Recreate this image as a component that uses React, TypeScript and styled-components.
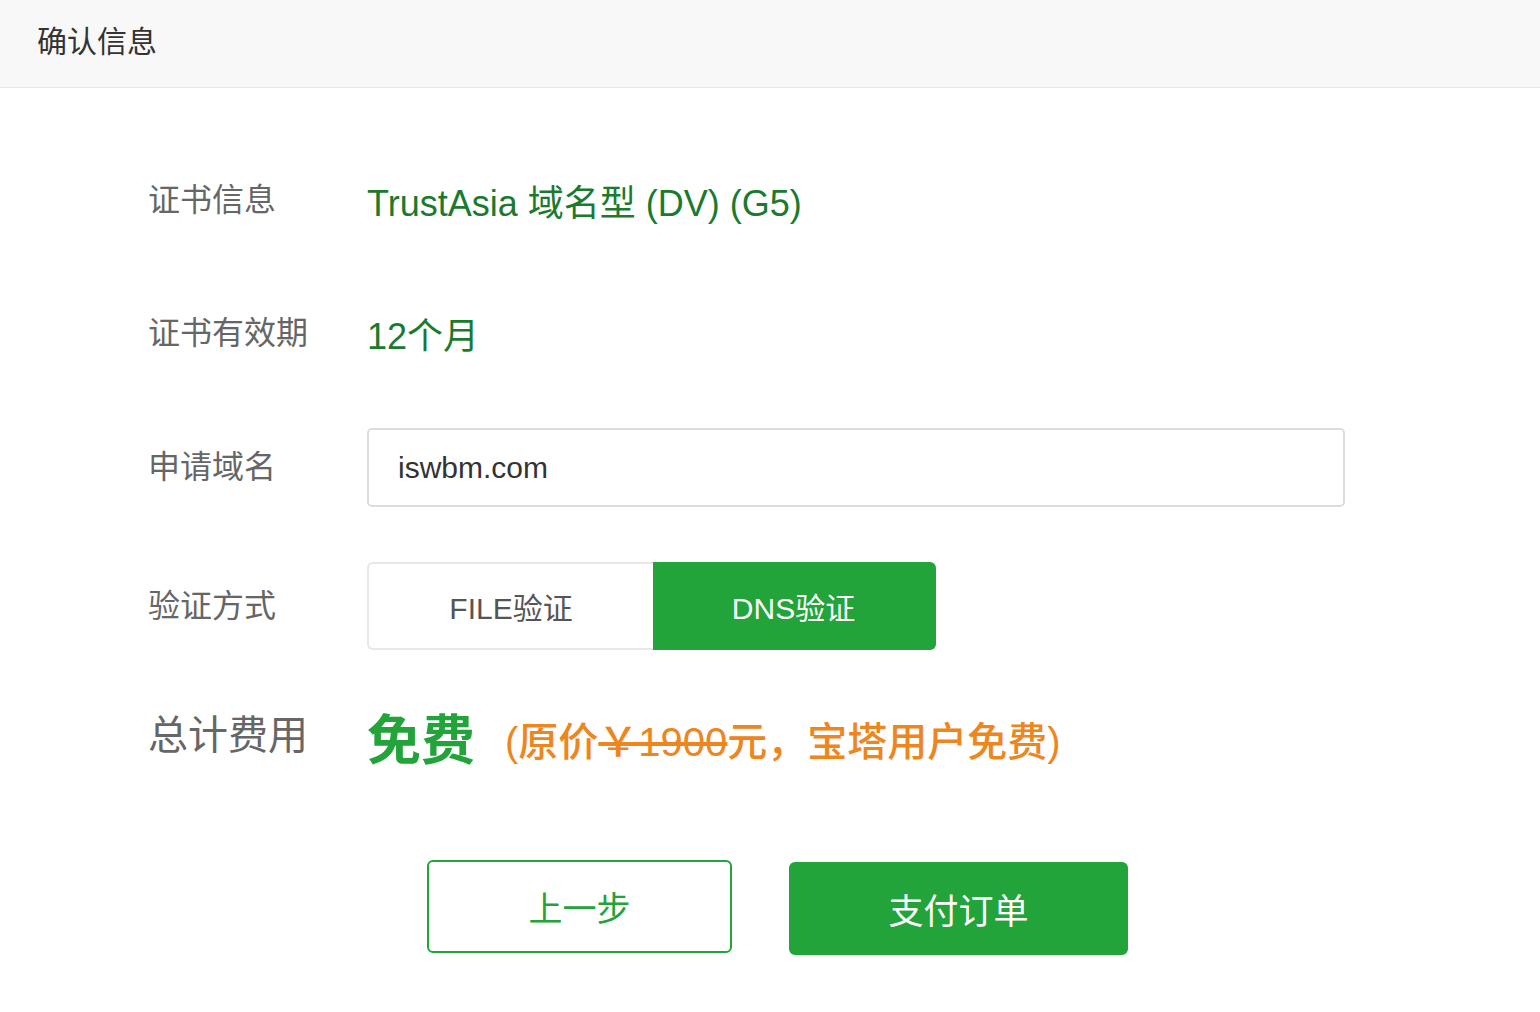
import React, { useState } from "react"
import styled, { createGlobalStyle } from "styled-components"

const GlobalStyle = createGlobalStyle`
  html, body {
    margin: 0;
    padding: 0;
    background: #fff;
    font-family: "Liberation Sans", "Noto Sans CJK SC", sans-serif;
  }
`

const Header = styled.div`
  height: 88px;
  box-sizing: border-box;
  padding: 0 0 9px 37px;
  background-color: #f8f8f8;
  border-bottom: 1px solid #e6e6e6;
  display: flex;
  align-items: center;
  font-size: 30px;
  color: #333;
`

const Body = styled.div`
  padding: 73px 0 0 148px;
  display: flex;
  flex-direction: column;
  gap: 55px;
`

const Row = styled.div<{ $height?: number; $shift?: number }>`
  display: flex;
  align-items: center;
  min-height: ${p => p.$height ?? 78}px;
  margin-top: ${p => p.$shift ?? 0}px;
`

const Label = styled.div<{ $large?: boolean }>`
  width: 219px;
  flex-shrink: 0;
  font-size: ${p => (p.$large ? 40 : 32)}px;
  color: #666;
  margin-top: ${p => (p.$large ? -10 : -6)}px;
`

const Value = styled.div`
  font-size: 36px;
  color: #1a7a2e;
`

const Input = styled.input`
  width: 978px;
  height: 79px;
  margin-top: 1px;
  box-sizing: border-box;
  border: 2px solid #dcdce0;
  border-radius: 5px;
  padding: 0 29px;
  font-family: inherit;
  font-size: 30px;
  color: #333;
  outline: none;
`

const Toggle = styled.div`
  display: flex;
  height: 88px;
`

const ToggleOption = styled.button<{ $active: boolean; $side: "left" | "right" }>`
  width: ${p => (p.$side === "left" ? 286 : 283)}px;
  height: 100%;
  font-family: inherit;
  font-size: 30px;
  cursor: pointer;
  border: 2px solid ${p => (p.$active ? "#22a43a" : "#e8e8e8")};
  background-color: ${p => (p.$active ? "#22a43a" : "#fff")};
  color: ${p => (p.$active ? "#fff" : "#555")};
  border-radius: ${p => (p.$side === "left" ? "6px 0 0 6px" : "0 6px 6px 0")};
  ${p => (p.$side === "left" ? "border-right: none;" : "border-left: none;")}
`

const Free = styled.span`
  font-size: 54px;
  font-weight: bold;
  color: #22a43a;
  margin-right: 30px;
`

const Note = styled.span`
  font-size: 40px;
  font-weight: 500;
  color: #ee8620;
  margin-top: 4px;
`

const Strike = styled.span`
  text-decoration: line-through;
`

const Actions = styled.div`
  display: flex;
  align-items: flex-start;
  gap: 57px;
  margin-top: 29px;
  padding-left: 279px;
`

const ActionButton = styled.button<{ $primary?: boolean }>`
  width: ${p => (p.$primary ? 339 : 305)}px;
  height: 93px;
  margin-top: ${p => (p.$primary ? 2 : 0)}px;
  box-sizing: border-box;
  border-radius: 6px;
  font-family: inherit;
  font-size: ${p => (p.$primary ? 35 : 34)}px;
  cursor: pointer;
  border: 2px solid #22a43a;
  background-color: ${p => (p.$primary ? "#22a43a" : "#fff")};
  color: ${p => (p.$primary ? "#fff" : "#22a43a")};
`

export default function App() {
  const [method, setMethod] = useState<"file" | "dns">("dns")
  return (
    <>
      <GlobalStyle />
      <Header>确认信息</Header>
      <Body>
        <Row>
          <Label>证书信息</Label>
          <Value>TrustAsia 域名型 (DV) (G5)</Value>
        </Row>
        <Row>
          <Label>证书有效期</Label>
          <Value>12个月</Value>
        </Row>
        <Row>
          <Label>申请域名</Label>
          <Input defaultValue="iswbm.com" />
        </Row>
        <Row $height={88}>
          <Label>验证方式</Label>
          <Toggle>
            <ToggleOption $side="left" $active={method === "file"} onClick={() => setMethod("file")}>
              FILE验证
            </ToggleOption>
            <ToggleOption $side="right" $active={method === "dns"} onClick={() => setMethod("dns")}>
              DNS验证
            </ToggleOption>
          </Toggle>
        </Row>
        <Row $shift={-8}>
          <Label $large>总计费用</Label>
          <Free>免费</Free>
          <Note>
            (原价<Strike>￥1900</Strike>元，宝塔用户免费)
          </Note>
        </Row>
        <Actions>
          <ActionButton>上一步</ActionButton>
          <ActionButton $primary>支付订单</ActionButton>
        </Actions>
      </Body>
    </>
  )
}
